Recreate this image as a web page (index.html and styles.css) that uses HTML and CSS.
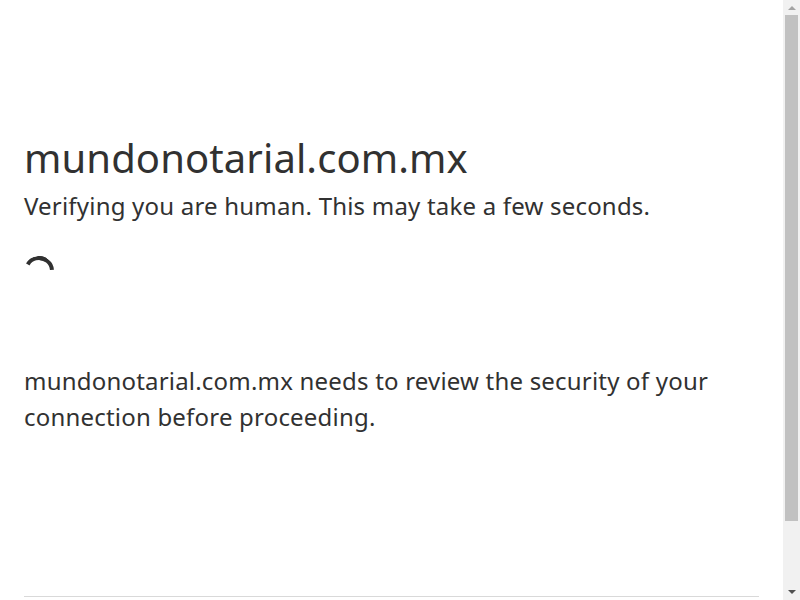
FILE: index.html
```html
<!doctype html>
<html lang="en-US">
<head>
  <meta charset="UTF-8">
  <meta name="viewport" content="width=device-width, initial-scale=1.0">
  <title>Just a moment...</title>
  <link rel="stylesheet" href="styles.css">
</head>
<body>
  <div class="main-wrapper" role="main">
    <div class="main-content">
      <h1 class="zone-name-title">mundonotarial.com.mx</h1>
      <h2 class="challenge-title">Verifying you are human. This may take a few seconds.</h2>
      <div class="loading-spinner">
        <div class="lds-ring">
          <div class="ring-a"></div>
          <div class="ring-b"></div>
        </div>
      </div>
      <div class="core-msg">mundonotarial.com.mx needs to review the security of your connection before proceeding.</div>
    </div>
  </div>

  <div class="footer" role="contentinfo">
    <div class="footer-inner"></div>
  </div>

  <div class="scrollbar" aria-hidden="true">
    <div class="scroll-btn"><span class="arrow-up"></span></div>
    <div class="scroll-thumb"></div>
    <div class="scroll-track"></div>
    <div class="scroll-btn"><span class="arrow-down"></span></div>
  </div>
</body>
</html>
```

FILE: styles.css
```css
* {
  box-sizing: border-box;
  margin: 0;
  padding: 0;
}

html {
  color: #313131;
  font-family: "Noto Sans", "Open Sans", sans-serif;
  letter-spacing: 0.2px;
  overflow: hidden;
}

body {
  background: #fff;
  display: flex;
  flex-direction: column;
  min-height: 100vh;
  margin-right: 17px;
}

.main-wrapper {
  display: flex;
  flex: 1;
  flex-direction: column;
  align-items: center;
}

.main-content {
  width: 100%;
  max-width: 60rem;
  margin: 0 auto;
  padding: 8rem 1.5rem 129px;
}

.zone-name-title {
  font-size: 2.5rem;
  font-weight: 400;
  line-height: 3.75rem;
  letter-spacing: 0.1px;
}

.challenge-title {
  font-size: 1.5rem;
  font-weight: 400;
  line-height: 2.25rem;
}

.loading-spinner {
  margin: 2rem 0;
  height: 75px;
}

.lds-ring {
  position: relative;
  width: 1.875rem;
  height: 1.875rem;
}

.lds-ring div {
  position: absolute;
  top: 0;
  left: 0;
  width: 1.875rem;
  height: 1.875rem;
  border: 0.28rem solid transparent;
  border-top-color: #313131;
  border-radius: 50%;
}

.lds-ring .ring-a {
  transform: rotate(40deg);
}

.lds-ring .ring-b {
  transform: rotate(-15deg);
}

.core-msg {
  font-size: 1.5rem;
  line-height: 2.25rem;
  margin: 2rem 0;
}

.footer {
  width: 100%;
  max-width: 60rem;
  margin: 0 auto;
  padding: 0 1.5rem;
}

.footer-inner {
  border-top: 1px solid #d9d9d9;
  height: 4rem;
}

/* fake classic scrollbar, the page in the shot is scrolled to the top */
.scrollbar {
  position: fixed;
  top: 0;
  right: 0;
  bottom: 0;
  width: 17px;
  background: #f1f1f1;
  display: flex;
  flex-direction: column;
}

.scroll-btn {
  height: 15px;
  display: flex;
  align-items: center;
  justify-content: center;
}

.scroll-btn:last-child {
  height: 17px;
}

.arrow-up {
  border-left: 4px solid transparent;
  border-right: 4px solid transparent;
  border-bottom: 4px solid #a3a3a3;
}

.arrow-down {
  border-left: 4px solid transparent;
  border-right: 4px solid transparent;
  border-top: 4px solid #505050;
}

.scroll-thumb {
  height: 506px;
  margin: 0 2px;
  background: #c1c1c1;
}

.scroll-track {
  flex: 1;
}
```
